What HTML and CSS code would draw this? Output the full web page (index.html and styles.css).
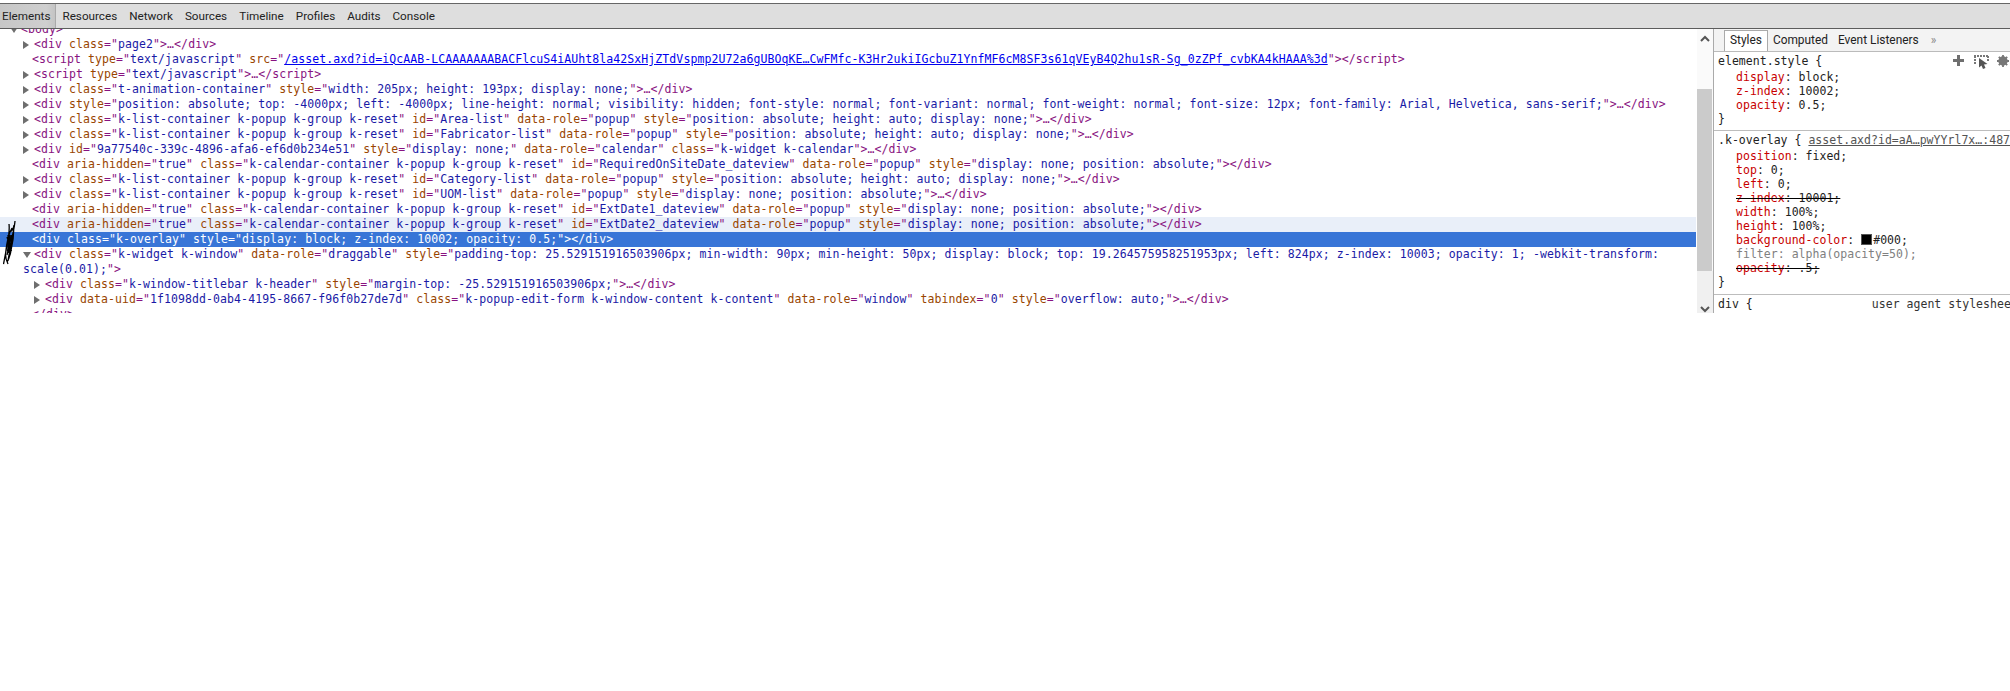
FILE: index.html
```html
<!DOCTYPE html>
<html lang="en">
<head>
<meta charset="utf-8">
<title>Developer Tools</title>
<link rel="stylesheet" href="styles.css">
</head>
<body>
<div class="toolbar">
  <div class="tab sel">Elements</div>
  <div class="tab">Resources</div>
  <div class="tab">Network</div>
  <div class="tab">Sources</div>
  <div class="tab">Timeline</div>
  <div class="tab">Profiles</div>
  <div class="tab">Audits</div>
  <div class="tab">Console</div>
</div>
<div class="panel">
  <div class="tree">
    <div class="tree-inner">
      <div class="row body-row"><span class="arrow down"></span><span class="t">&lt;body&gt;</span></div>
      <div class="row arr"><span class="arrow"></span><span class="t">&lt;div <span class="n">class</span>="<span class="v">page2</span>"&gt;…&lt;/div&gt;</span></div>
      <div class="row"><span class="t">&lt;script <span class="n">type</span>="<span class="v">text/javascript</span>" <span class="n">src</span>="<span class="l">/asset.axd?id=iQcAAB-LCAAAAAAABACFlcuS4iAUht8la42SxHjZTdVspmp2U72a6gUBOqKE…CwFMfc-K3Hr2ukiIGcbuZ1YnfMF6cM8SF3s61qVEyB4Q2hu1sR-Sg_0zZPf_cvbKA4kHAAA%3d</span>"&gt;&lt;/script&gt;</span></div>
      <div class="row arr"><span class="arrow"></span><span class="t">&lt;script <span class="n">type</span>="<span class="v">text/javascript</span>"&gt;…&lt;/script&gt;</span></div>
      <div class="row arr"><span class="arrow"></span><span class="t">&lt;div <span class="n">class</span>="<span class="v">t-animation-container</span>" <span class="n">style</span>="<span class="v">width: 205px; height: 193px; display: none;</span>"&gt;…&lt;/div&gt;</span></div>
      <div class="row arr"><span class="arrow"></span><span class="t">&lt;div <span class="n">style</span>="<span class="v">position: absolute; top: -4000px; left: -4000px; line-height: normal; visibility: hidden; font-style: normal; font-variant: normal; font-weight: normal; font-size: 12px; font-family: Arial, Helvetica, sans-serif;</span>"&gt;…&lt;/div&gt;</span></div>
      <div class="row arr"><span class="arrow"></span><span class="t">&lt;div <span class="n">class</span>="<span class="v">k-list-container k-popup k-group k-reset</span>" <span class="n">id</span>="<span class="v">Area-list</span>" <span class="n">data-role</span>="<span class="v">popup</span>" <span class="n">style</span>="<span class="v">position: absolute; height: auto; display: none;</span>"&gt;…&lt;/div&gt;</span></div>
      <div class="row arr"><span class="arrow"></span><span class="t">&lt;div <span class="n">class</span>="<span class="v">k-list-container k-popup k-group k-reset</span>" <span class="n">id</span>="<span class="v">Fabricator-list</span>" <span class="n">data-role</span>="<span class="v">popup</span>" <span class="n">style</span>="<span class="v">position: absolute; height: auto; display: none;</span>"&gt;…&lt;/div&gt;</span></div>
      <div class="row arr"><span class="arrow"></span><span class="t">&lt;div <span class="n">id</span>="<span class="v">9a77540c-339c-4896-afa6-ef6d0b234e51</span>" <span class="n">style</span>="<span class="v">display: none;</span>" <span class="n">data-role</span>="<span class="v">calendar</span>" <span class="n">class</span>="<span class="v">k-widget k-calendar</span>"&gt;…&lt;/div&gt;</span></div>
      <div class="row"><span class="t">&lt;div <span class="n">aria-hidden</span>="<span class="v">true</span>" <span class="n">class</span>="<span class="v">k-calendar-container k-popup k-group k-reset</span>" <span class="n">id</span>="<span class="v">RequiredOnSiteDate_dateview</span>" <span class="n">data-role</span>="<span class="v">popup</span>" <span class="n">style</span>="<span class="v">display: none; position: absolute;</span>"&gt;&lt;/div&gt;</span></div>
      <div class="row arr"><span class="arrow"></span><span class="t">&lt;div <span class="n">class</span>="<span class="v">k-list-container k-popup k-group k-reset</span>" <span class="n">id</span>="<span class="v">Category-list</span>" <span class="n">data-role</span>="<span class="v">popup</span>" <span class="n">style</span>="<span class="v">position: absolute; height: auto; display: none;</span>"&gt;…&lt;/div&gt;</span></div>
      <div class="row arr"><span class="arrow"></span><span class="t">&lt;div <span class="n">class</span>="<span class="v">k-list-container k-popup k-group k-reset</span>" <span class="n">id</span>="<span class="v">UOM-list</span>" <span class="n">data-role</span>="<span class="v">popup</span>" <span class="n">style</span>="<span class="v">display: none; position: absolute;</span>"&gt;…&lt;/div&gt;</span></div>
      <div class="row"><span class="t">&lt;div <span class="n">aria-hidden</span>="<span class="v">true</span>" <span class="n">class</span>="<span class="v">k-calendar-container k-popup k-group k-reset</span>" <span class="n">id</span>="<span class="v">ExtDate1_dateview</span>" <span class="n">data-role</span>="<span class="v">popup</span>" <span class="n">style</span>="<span class="v">display: none; position: absolute;</span>"&gt;&lt;/div&gt;</span></div>
      <div class="row hover"><span class="t">&lt;div <span class="n">aria-hidden</span>="<span class="v">true</span>" <span class="n">class</span>="<span class="v">k-calendar-container k-popup k-group k-reset</span>" <span class="n">id</span>="<span class="v">ExtDate2_dateview</span>" <span class="n">data-role</span>="<span class="v">popup</span>" <span class="n">style</span>="<span class="v">display: none; position: absolute;</span>"&gt;&lt;/div&gt;</span></div>
      <div class="row selected">&lt;div class="k-overlay" style="display: block; z-index: 10002; opacity: 0.5;"&gt;&lt;/div&gt;</div>
      <div class="row arr"><span class="arrow down"></span><span class="t">&lt;div <span class="n">class</span>="<span class="v">k-widget k-window</span>" <span class="n">data-role</span>="<span class="v">draggable</span>" <span class="n">style</span>="<span class="v">padding-top: 25.529151916503906px; min-width: 90px; min-height: 50px; display: block; top: 19.264575958251953px; left: 824px; z-index: 10003; opacity: 1; -webkit-transform:</span></span></div>
      <div class="row wrapped"><span class="t"><span class="v">scale(0.01);</span>"&gt;</span></div>
      <div class="row arr child"><span class="arrow"></span><span class="t">&lt;div <span class="n">class</span>="<span class="v">k-window-titlebar k-header</span>" <span class="n">style</span>="<span class="v">margin-top: -25.529151916503906px;</span>"&gt;…&lt;/div&gt;</span></div>
      <div class="row arr child"><span class="arrow"></span><span class="t">&lt;div <span class="n">data-uid</span>="<span class="v">1f1098dd-0ab4-4195-8667-f96f0b27de7d</span>" <span class="n">class</span>="<span class="v">k-popup-edit-form k-window-content k-content</span>" <span class="n">data-role</span>="<span class="v">window</span>" <span class="n">tabindex</span>="<span class="v">0</span>" <span class="n">style</span>="<span class="v">overflow: auto;</span>"&gt;…&lt;/div&gt;</span></div>
      <div class="row"><span class="t">&lt;/div&gt;</span></div>
    </div>
    <svg class="scribble" width="13" height="44" viewBox="0 0 13 44" aria-hidden="true">
      <path d="M12 0 C11.5 7 9.5 13 8.5 20 C7.5 27 6 33 5 40 M6 3 C7 11 5 19 3.5 27 C2.5 33 1.5 38 0.5 43 M9 7 C5 13 3.5 23 2.5 33 C2.5 38 4 41 5 43 M7 11 C9.5 10 10.5 7 11 4 C11 14 9.5 24 7.5 32 C6.5 36 5.5 39 4 41 M6 16 C8 22 7 29 6 36 M4 16 L8.5 30 M8.5 14 L4 34 M5 14 L6 32 M7 14 L4.5 30" fill="none" stroke="#000" stroke-width="1.3"/>
    </svg>
  </div>
  <div class="scrollbar">
    <div class="sb-up"><svg width="10" height="7" viewBox="0 0 10 7" aria-hidden="true"><path d="M1 6 L5 2 L9 6" fill="none" stroke="#555" stroke-width="2"/></svg></div>
    <div class="sb-thumb"></div>
    <div class="sb-track"><svg width="10" height="7" viewBox="0 0 10 7" aria-hidden="true"><path d="M1 1 L5 5 L9 1" fill="none" stroke="#555" stroke-width="2"/></svg></div>
  </div>
  <div class="sidebar">
    <div class="side-tabs">
      <div class="stab sel">Styles</div>
      <div class="stab">Computed</div>
      <div class="stab">Event Listeners</div>
      <div class="stab more">»</div>
    </div>
    <div class="section first">
      <div class="sel-row"><span>element.style {</span>
        <span class="tools">
          <svg class="tool-plus" width="11" height="11" viewBox="0 0 11 11" aria-hidden="true"><path d="M5.5 0 V11 M0 5.5 H11" stroke="#6f6f6f" stroke-width="3"/></svg>
          <svg width="15" height="14" viewBox="0 0 15 14" aria-hidden="true"><path d="M0 1 H14 M1 1 V9 M14 1 V6" stroke="#777" stroke-width="2" stroke-dasharray="2 1" fill="none"/><path d="M5 3 L13.5 9 L10 9.5 L11.5 13 L9 14 L7.5 10.5 L5 12.5 Z" fill="#555"/></svg>
          <svg width="12" height="12" viewBox="0 0 12 12" aria-hidden="true"><circle cx="6" cy="6" r="3.5" fill="none" stroke="#777" stroke-width="2.4"/><path d="M6 0 V12 M0 6 H12 M1.8 1.8 L10.2 10.2 M10.2 1.8 L1.8 10.2" stroke="#777" stroke-width="1.8"/></svg>
        </span>
      </div>
      <div class="props">
        <div class="prop"><span class="pn">display</span>: block;</div>
        <div class="prop"><span class="pn">z-index</span>: 10002;</div>
        <div class="prop"><span class="pn">opacity</span>: 0.5;</div>
      </div>
      <div class="close">}</div>
    </div>
    <div class="section second">
      <div class="sel-row"><span>.k-overlay { <span class="src">asset.axd?id=aA…pwYYrl7x…:487</span></span></div>
      <div class="props">
        <div class="prop"><span class="pn">position</span>: fixed;</div>
        <div class="prop"><span class="pn">top</span>: 0;</div>
        <div class="prop"><span class="pn">left</span>: 0;</div>
        <div class="prop"><span class="strike"><span class="pn">z-index</span>: 10001;</span></div>
        <div class="prop"><span class="pn">width</span>: 100%;</div>
        <div class="prop"><span class="pn">height</span>: 100%;</div>
        <div class="prop"><span class="pn">background-color</span>: <span class="swatch"></span>#000;</div>
        <div class="prop muted">filter: alpha(opacity=50);</div>
        <div class="prop"><span class="strike"><span class="pn">opacity</span>: .5;</span></div>
      </div>
      <div class="close">}</div>
    </div>
    <div class="section third">
      <div class="sel-row"><span>div {</span><span class="ua">user agent stylesheet</span></div>
    </div>
  </div>
</div>
</body>
</html>
```
FILE: styles.css
```css
* { box-sizing: border-box; }
html, body { margin: 0; padding: 0; background: #fff; }
body {
  height: 691px;
  overflow: hidden;
  padding-top: 3px;
  font-family: "DejaVu Sans Mono", monospace;
  font-size: 11.5px;
  letter-spacing: 0.08px;
}

.toolbar {
  display: flex;
  height: 26px;
  background: #dedede;
  border-top: 1px solid #666;
  border-bottom: 1px solid #5c5c5c;
  font-family: Roboto, sans-serif;
  font-size: 11.7px;
  letter-spacing: 0;
  color: #222;
}
.tab {
  padding: 0 6px;
  line-height: 24px;
  white-space: nowrap;
}
.tab.sel {
  margin-left: -4px;
  background: linear-gradient(to right, #c6c6c6, #cfcfcf 85%, #c4c4c4);
  border-right: 1px solid #aaa;
  padding-right: 5px;
}

.panel {
  display: flex;
  height: 284px;
  overflow: hidden;
}

.tree {
  position: relative;
  flex: 0 0 1697px;
  overflow: hidden;
  padding-right: 1px;
}
.tree-inner { margin-top: -7px; }
.row {
  display: flex;
  align-items: center;
  height: 15px;
  padding-left: 32px;
  white-space: pre;
  line-height: 15px;
}
.row.arr { padding-left: 23px; }
.row.body-row { padding-left: 10px; }
.row.wrapped { padding-left: 23px; }
.row.child { padding-left: 34px; }
.row.hover { background: #e9eff9; }
.row.selected { background: #3875d7; color: #fff; }

.arrow {
  flex: none;
  width: 0;
  height: 0;
  margin-right: 5px;
  border-style: solid;
  border-width: 4px 0 4px 6px;
  border-color: transparent transparent transparent #6e6e6e;
}
.arrow.down {
  border-width: 6px 4px 0 4px;
  border-color: #6e6e6e transparent transparent transparent;
  margin-right: 3px;
}

.t { color: #881280; }
.n { color: #994500; }
.v { color: #1a1aa6; }
.l { color: #00e; text-decoration: underline; }

.scribble {
  position: absolute;
  left: 3px;
  top: 192px;
}

.scrollbar {
  flex: 0 0 16px;
  display: flex;
  flex-direction: column;
  background: #fafafa;
}
.sb-up {
  height: 61px;
  padding: 6px 0 0 3px;
  line-height: 0;
}
.sb-thumb { height: 186px; background: #cbcbcb; margin-right: 1px; }
.sb-track {
  flex: 1;
  background: #f0f0f0;
  padding: 35px 0 0 3px;
  line-height: 0;
}

.sidebar {
  flex: 1;
  min-width: 0;
  border-left: 1px solid #aaa;
  overflow: hidden;
  line-height: 14px;
  color: #222;
  letter-spacing: 0.03px;
}
.side-tabs {
  display: flex;
  align-items: flex-end;
  height: 23px;
  padding: 2px 0 0 10px;
  background: #f3f3f3;
  border-bottom: 1px solid #bbb;
  font-family: Roboto, sans-serif;
  font-size: 11.9px;
  letter-spacing: 0;
  color: #222;
}
.stab {
  height: 21px;
  line-height: 19px;
  padding: 0 4px;
  white-space: nowrap;
  border: 1px solid transparent;
  border-bottom: 0;
}
.stab.sel {
  background: #fff;
  border-color: #aaa;
  padding: 0 5px;
}
.stab.more { color: #888; margin-left: 2px; }

.section { padding-left: 4px; }
.section.first { padding-top: 2px; padding-bottom: 4px; border-bottom: 1px solid #bdbdbd; }
.section.second { padding-top: 2px; padding-bottom: 5px; border-bottom: 1px solid #bdbdbd; }
.section.third { padding-top: 2px; }

.sel-row {
  display: flex;
  height: 14px;
  white-space: pre;
}
.tools {
  display: flex;
  align-items: flex-start;
  gap: 8px;
  margin-left: auto;
  padding-top: 1px;
  padding-right: 1px;
}
.tool-plus { margin-right: 2px; }
.props { margin-top: 2px; }
.prop {
  height: 14px;
  padding-left: 18px;
  white-space: pre;
}
.close { height: 14px; }
.pn { color: #c80000; }
.strike { text-decoration: line-through; text-decoration-color: #000; }
.muted { color: #808080; }
.src { color: #545454; text-decoration: underline; }
.ua { margin-left: 119px; color: #333; }
.swatch {
  display: inline-block;
  width: 11px;
  height: 11px;
  margin-right: 1px;
  background: #000;
  border: 1px solid #555;
  vertical-align: -1px;
}
```
